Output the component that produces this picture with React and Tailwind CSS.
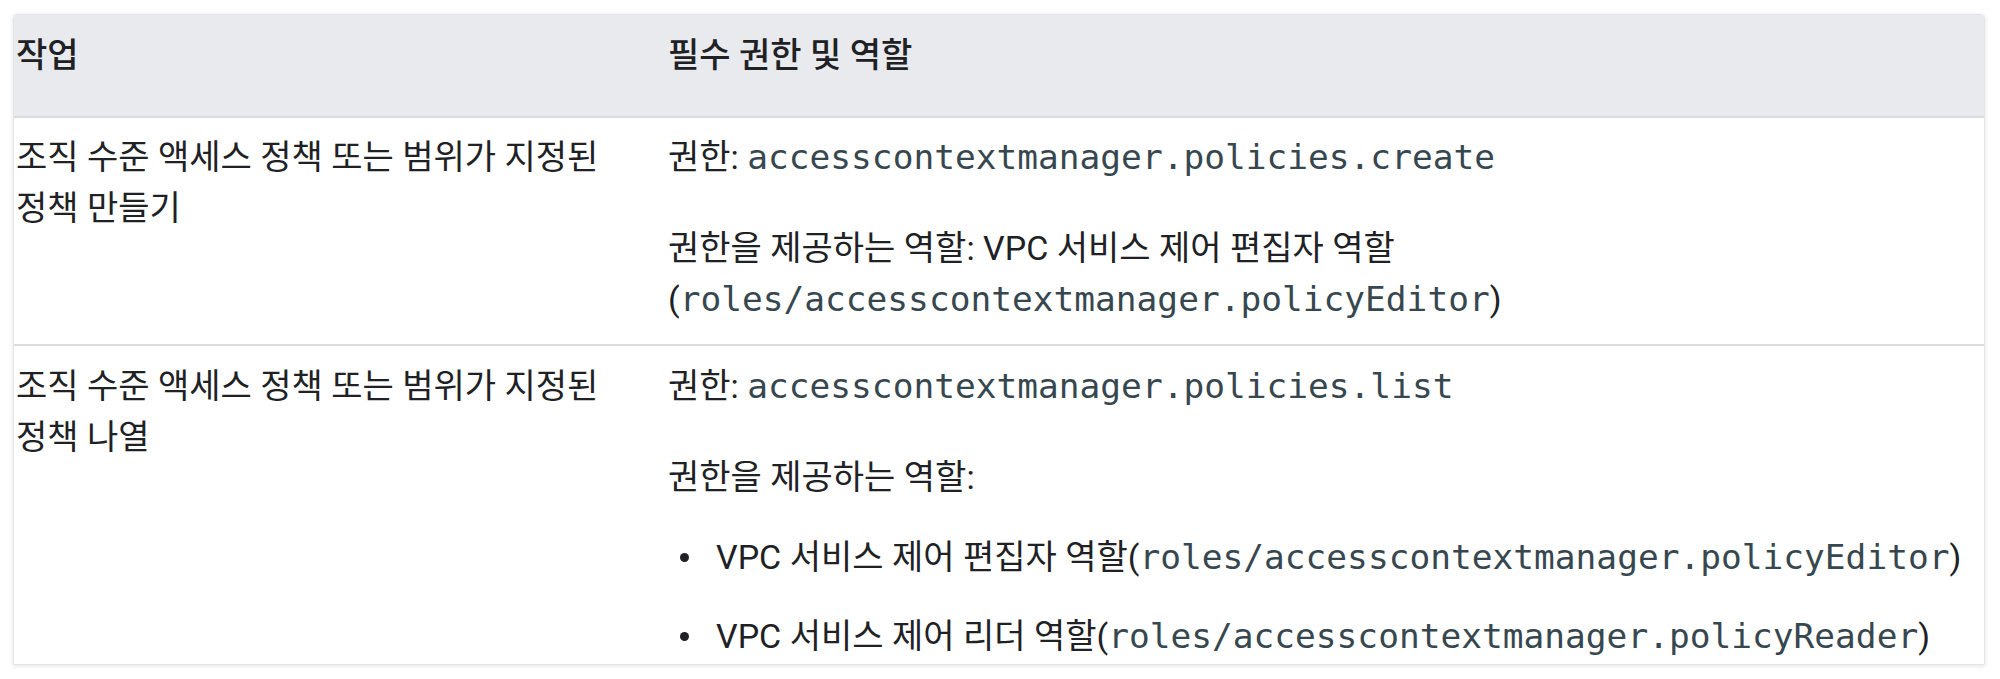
import React from 'react';

const Code = ({ children }) => (
  <code className="font-['DejaVu_Sans_Mono',monospace] text-[34.5px] leading-none text-[#37474f]">{children}</code>
);

const rows = [
  {
    task: '조직 수준 액세스 정책 또는 범위가 지정된 정책 만들기',
    perm: 'accesscontextmanager.policies.create',
  },
  {
    task: '조직 수준 액세스 정책 또는 범위가 지정된 정책 나열',
    perm: 'accesscontextmanager.policies.list',
  },
];

const Bullet = ({ children }) => (
  <li className="flex items-center">
    <span className="ml-[12px] mr-[27px] h-[9px] w-[9px] shrink-0 rounded-full bg-[#202124]" />
    <span className="whitespace-nowrap">{children}</span>
  </li>
);

export default function App() {
  return (
    <div className="min-h-screen bg-white pt-[14px] pl-[13px] font-['Roboto','Noto_Sans_CJK_KR',sans-serif] text-[#202124]">
      <div className="w-[1972px] overflow-hidden rounded-t-[4px] border border-[#e3e5e8] shadow-[0_1px_4px_rgba(60,64,67,0.15)]">
        <div className="grid grid-cols-[652px_1fr] border-b-2 border-[#dadce0] bg-[#e8eaed] text-[34px] font-medium leading-[51px]">
          <div className="pl-[2px] pt-[15px] pb-[35px]">작업</div>
          <div className="pl-[2px] pt-[15px] pb-[35px]">필수 권한 및 역할</div>
        </div>

        <div className="grid grid-cols-[652px_1fr] border-b-2 border-[#dadce0] text-[34px] leading-[51px]">
          <div className="pl-[2px] pr-[24px] pt-[14px] break-keep">{rows[0].task}</div>
          <div className="pl-[2px] pr-[14px] pt-[14px] pb-[19px]">
            <p className="mb-[40px]">권한: <Code>{rows[0].perm}</Code></p>
            <p>
              권한을 제공하는 역할: VPC 서비스 제어 편집자 역할
              <span className="whitespace-nowrap">(<Code>roles/accesscontextmanager.policyEditor</Code>)</span>
            </p>
          </div>
        </div>

        <div className="grid grid-cols-[652px_1fr] text-[34px] leading-[51px]">
          <div className="pl-[2px] pr-[24px] pt-[15px] break-keep">{rows[1].task}</div>
          <div className="pl-[2px] pr-[14px] pt-[15px] pb-[2px]">
            <p className="mb-[40px]">권한: <Code>{rows[1].perm}</Code></p>
            <p className="mb-[29px]">권한을 제공하는 역할:</p>
            <ul className="space-y-[28px]">
              <Bullet>VPC 서비스 제어 편집자 역할(<Code>roles/accesscontextmanager.policyEditor</Code>)</Bullet>
              <Bullet>VPC 서비스 제어 리더 역할(<Code>roles/accesscontextmanager.policyReader</Code>)</Bullet>
            </ul>
          </div>
        </div>
      </div>
    </div>
  );
}
